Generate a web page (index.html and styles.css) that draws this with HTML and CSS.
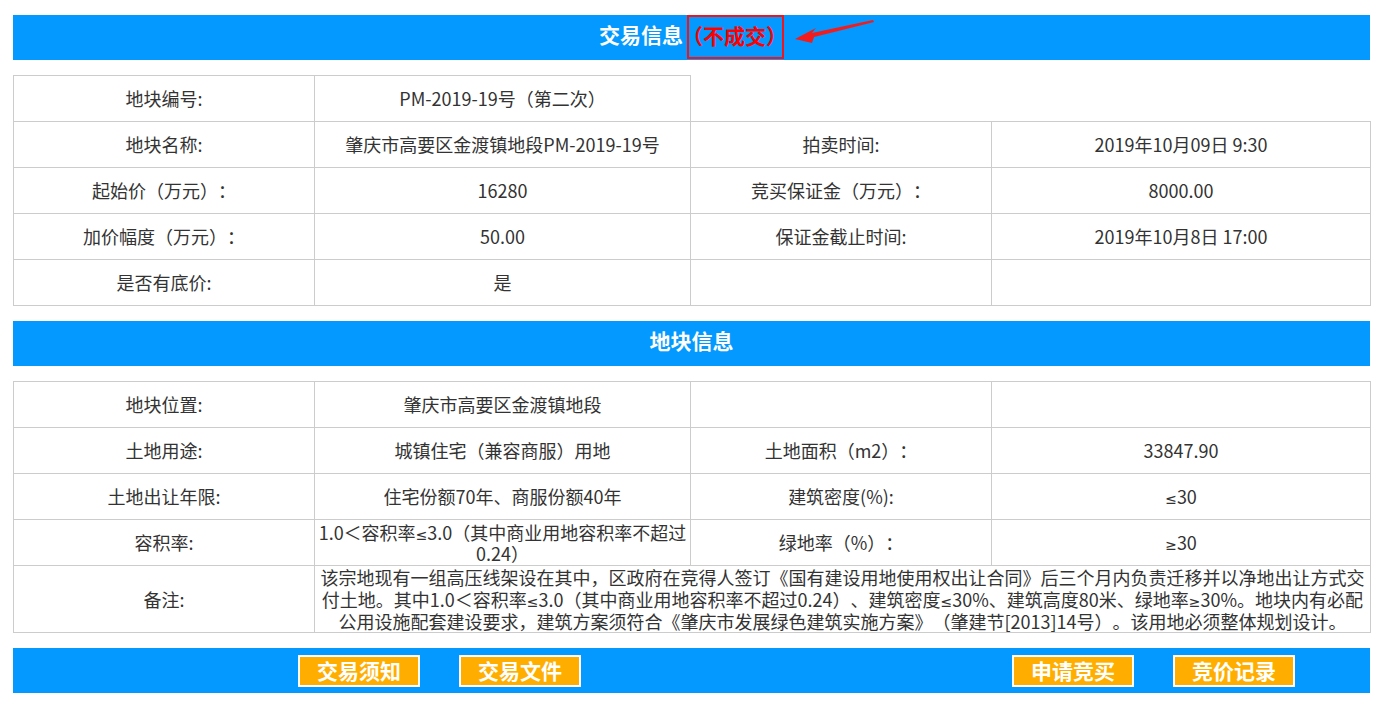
FILE: index.html
```html
<!DOCTYPE html>
<html lang="zh-CN">
<head>
<meta charset="utf-8">
<title>交易信息</title>
<link rel="stylesheet" href="styles.css">
</head>
<body>
<div class="page">
  <div class="bar title-bar">
    <span class="title">交易信息</span><span class="status">（不成交）</span>
    <svg class="arrow" width="90" height="30" viewBox="0 0 90 30" aria-hidden="true">
      <polygon points="1,21 22,10 18,15 79,2 80,4 20,19 18,25" fill="#f21c1c"/>
    </svg>
  </div>

  <table class="info">
    <colgroup><col class="c1"><col class="c2"><col class="c3"><col class="c4"></colgroup>
    <tr><td>地块编号:</td><td>PM-2019-19号（第二次）</td></tr>
    <tr><td>地块名称:</td><td>肇庆市高要区金渡镇地段PM-2019-19号</td><td>拍卖时间:</td><td>2019年10月09日 9:30</td></tr>
    <tr><td>起始价（万元）：</td><td>16280</td><td>竞买保证金（万元）：</td><td>8000.00</td></tr>
    <tr><td>加价幅度（万元）：</td><td>50.00</td><td>保证金截止时间:</td><td>2019年10月8日 17:00</td></tr>
    <tr><td>是否有底价:</td><td>是</td><td></td><td></td></tr>
  </table>

  <div class="bar"><span class="title">地块信息</span></div>

  <table class="info">
    <colgroup><col class="c1"><col class="c2"><col class="c3"><col class="c4"></colgroup>
    <tr><td>地块位置:</td><td>肇庆市高要区金渡镇地段</td><td></td><td></td></tr>
    <tr><td>土地用途:</td><td>城镇住宅（兼容商服）用地</td><td>土地面积（m2）：</td><td>33847.90</td></tr>
    <tr><td>土地出让年限:</td><td>住宅份额70年、商服份额40年</td><td>建筑密度(%):</td><td><span class="m">≤</span>30</td></tr>
    <tr><td>容积率:</td><td class="tight">1.0＜容积率<span class="m">≤</span>3.0（其中商业用地容积率不超过0.24）</td><td>绿地率（%）：</td><td><span class="m">≥</span>30</td></tr>
    <tr class="note-row"><td>备注:</td><td colspan="3" class="note">该宗地现有一组高压线架设在其中，区政府在竞得人签订《国有建设用地使用权出让合同》后三个月内负责迁移并以净地出让方式交付土地。其中1.0＜容积率<span class="m">≤</span>3.0（其中商业用地容积率不超过0.24）、建筑密度<span class="m">≤</span>30%、建筑高度80米、绿地率<span class="m">≥</span>30%。地块内有必配公用设施配套建设要求，建筑方案须符合《肇庆市发展绿色建筑实施方案》（肇建节[2013]14号）。该用地必须整体规划设计。</td></tr>
  </table>

  <div class="bar actions">
    <a class="btn" href="#">交易须知</a>
    <a class="btn" href="#">交易文件</a>
    <a class="btn far" href="#">申请竞买</a>
    <a class="btn" href="#">竞价记录</a>
  </div>
</div>
</body>
</html>
```

FILE: styles.css
```css
html, body {
  margin: 0;
  padding: 0;
  background: #fff;
}
body {
  font-family: "Noto Sans CJK SC", "Noto Sans", sans-serif;
  color: #333;
  font-size: 18px;
  text-spacing-trim: space-all;
}
.page {
  width: 1357px;
  margin: 15px 0 0 13px;
}
.bar {
  position: relative;
  height: 45px;
  background: #0399ff;
  text-align: center;
  line-height: 39px;
}
.title {
  color: #fff;
  font-size: 21px;
  font-weight: bold;
  vertical-align: top;
}
.status {
  display: inline-block;
  box-sizing: border-box;
  width: 97px;
  height: 44px;
  line-height: 36px;
  border: 2px solid #f0141c;
  color: #ff0000;
  font-size: 21px;
  font-weight: bold;
  vertical-align: top;
  white-space: nowrap;
  text-align: left;
  text-indent: -7px;
  margin-left: 4px;
}
.arrow {
  position: absolute;
  left: 781px;
  top: 3px;
}
.m {
  font-family: "DejaVu Sans", "Noto Sans", sans-serif;
  font-size: 14px;
  line-height: 0;
}
.info {
  width: 1357px;
  table-layout: fixed;
  border-collapse: collapse;
  margin: 15px 0;
}
.c1 { width: 301px; }
.c2 { width: 376px; }
.c3 { width: 301px; }
.c4 { width: 379px; }
.info td {
  border: 1px solid #ccc;
  height: 45px;
  padding: 0 3px;
  text-align: center;
  vertical-align: middle;
  line-height: 21px;
}
.info td.tight {
  padding: 0 1px;
}
.info .note-row td {
  height: 66px;
}
.info td.note {
  line-height: 22px;
  padding: 0 2px;
}
.actions {
  display: flex;
  align-items: center;
  padding-left: 285px;
  line-height: normal;
}
.btn {
  box-sizing: border-box;
  width: 122px;
  height: 32px;
  line-height: 26px;
  background: #ffae00;
  border: 2px solid #fff;
  color: #fff;
  font-size: 21px;
  font-weight: bold;
  text-align: center;
  text-decoration: none;
  margin-right: 39px;
}
.btn.far {
  margin-left: 392px;
}
```
